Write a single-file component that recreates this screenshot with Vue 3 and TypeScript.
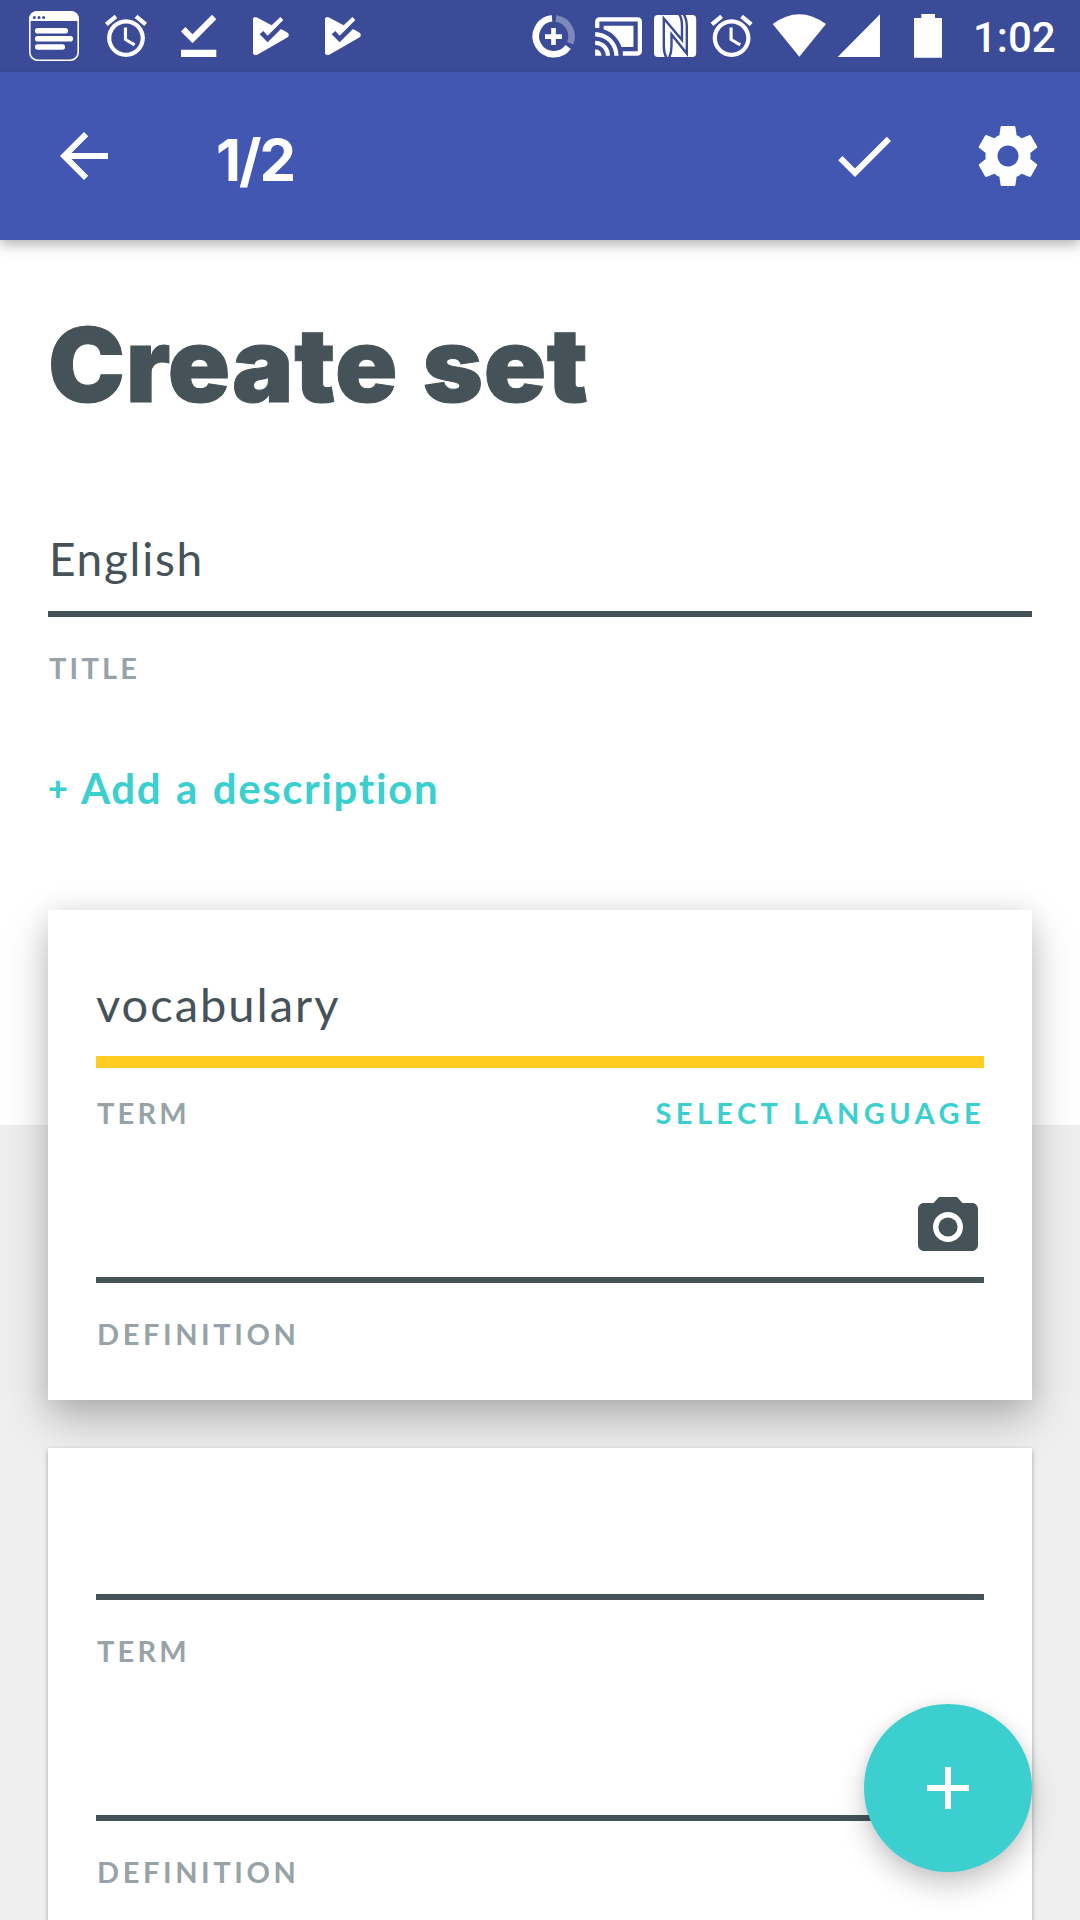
<script setup lang="ts">
interface TermCard {
  id: number
  term: string
  active: boolean
}

const cards: TermCard[] = [
  { id: 1, term: 'vocabulary', active: true },
  { id: 2, term: '', active: false },
]

const alarmPath =
  'M22 5.72l-4.6-3.86-1.29 1.53 4.6 3.86L22 5.72zM7.88 3.39L6.6 1.86 2 5.71l1.29 1.53 4.59-3.85zM12.5 8H11v6l4.75 2.85.75-1.23-4-2.37V8zM12 4c-4.97 0-9 4.03-9 9s4.02 9 9 9c4.97 0 9-4.03 9-9s-4.03-9-9-9zm0 16c-3.87 0-7-3.13-7-7s3.13-7 7-7 7 3.13 7 7-3.13 7-7 7z'
const storePath =
  'M759 58Q759 51 768 51L815 76L841 51L850 60L803 107L790 93L779 103L803 127L843 87L863 98Q870 105 863 112L772 164Q759 168 759 158Z'
</script>

<template>
  <div class="screen">
    <div class="status">
      <div class="notifications">
        <svg width="72" height="72" viewBox="18 0 72 72">
          <rect x="29.8" y="11.8" width="48.4" height="48.4" rx="8" fill="none" stroke="#fff" stroke-width="1.6" />
          <path d="M29 21V19a8 8 0 0 1 8-8h34a8 8 0 0 1 8 8v2z" fill="#fff" />
          <g fill="#3b4b98"><circle cx="34.3" cy="17.4" r="1.5" /><circle cx="39" cy="17.4" r="1.5" /><circle cx="43.6" cy="17.4" r="1.5" /></g>
          <path d="M37.7 30.7H65.3M37.7 38.8H70.3M37.7 47H62.3" stroke="#fff" stroke-width="5.6" stroke-linecap="round" />
        </svg>
        <svg width="72" height="72" viewBox="90 0 72 72">
          <path :d="alarmPath" transform="translate(100.8 10.8) scale(2.1)" fill="#fff" />
        </svg>
        <svg width="72" height="72" viewBox="162 0 72 72">
          <path d="M181 31.5L185.3 27L192.5 34.2L212 14.7L216.3 19.3L192.5 43.3ZM181 49.7H216.3V57H181Z" fill="#fff" />
        </svg>
        <svg width="72" height="72" viewBox="234 0 72 72">
          <path :d="storePath" transform="scale(.33333)" fill="#fff" />
        </svg>
        <svg width="72" height="72" viewBox="234 0 72 72">
          <path :d="storePath" transform="scale(.33333)" fill="#fff" />
        </svg>
      </div>
      <div class="system">
        <svg width="56" height="72" viewBox="528 0 56 72" fill="none">
          <path d="M552 18.3A18 18 0 1 0 568.2 47" stroke="#fff" stroke-width="6.6" />
          <path d="M556 18.5A18 18 0 0 1 570.2 43.2" stroke="#fff" stroke-opacity=".34" stroke-width="6.6" />
          <path d="M545 36.6H562M553.5 28V45" stroke="#fff" stroke-width="4.6" />
        </svg>
        <svg width="64" height="72" viewBox="584 0 64 72">
          <path
            transform="translate(593 10.9) scale(2.13)"
            fill="#fff"
            d="M1 18v3h3c0-1.66-1.34-3-3-3zm0-4v2c2.76 0 5 2.24 5 5h2c0-3.87-3.13-7-7-7zm18-7H5v1.63c3.96 1.28 7.09 4.41 8.37 8.37H19V7zM1 10v2c4.97 0 9 4.03 9 9h2c0-6.08-4.93-11-11-11zm20-7H3c-1.1 0-2 .9-2 2v3h2V5h18v14h-7v2h7c1.1 0 2-.9 2-2V5c0-1.1-.9-2-2-2z"
          />
        </svg>
        <svg width="56" height="72" viewBox="648 0 56 72" fill="none">
          <rect x="654" y="15" width="42.2" height="42" rx="4" fill="#fff" />
          <g stroke="#3b4b98" stroke-width="2.4">
            <path d="M666.5 58Q663.8 53 663.8 46V18.5L682 40V26Q682 18 679 14" />
            <path d="M683.5 14Q686.8 19 686.8 26V53.5L671.5 34.5V46Q671.5 53 669 58" />
          </g>
        </svg>
        <svg width="58" height="72" viewBox="704 0 58 72">
          <path :d="alarmPath" transform="translate(706.4 10.8) scale(2.1)" fill="#fff" />
        </svg>
        <svg width="70" height="72" viewBox="762 0 70 72">
          <path d="M772.7 24Q799.3 4.3 826 24L799.3 56.7Z" fill="#fff" />
        </svg>
        <svg width="60" height="72" viewBox="832 0 60 72">
          <path d="M837.7 57L880 14.3V57Z" fill="#fff" />
        </svg>
        <svg width="68" height="72" viewBox="892 0 68 72">
          <path d="M914 18H921.3V14H935V18H942V57.7H914Z" fill="#fff" />
        </svg>
        <span class="clock">1:02</span>
      </div>
    </div>

    <header class="appbar">
      <svg width="72" height="72" viewBox="0 0 24 24" fill="#fff">
        <path d="M20 11H7.83l5.59-5.59L12 4l-8 8 8 8 1.41-1.41L7.83 13H20v-2z" />
      </svg>
      <span class="progress">1/2</span>
      <svg width="72" height="72" viewBox="0 0 24 24" fill="#fff">
        <path d="M9 16.17L4.83 12l-1.42 1.41L9 19 21 7l-1.41-1.41z" />
      </svg>
      <svg class="gear" width="72" height="72" viewBox="0 0 24 24" fill="#fff">
        <path
          d="M19.43 12.98c.04-.32.07-.64.07-.98s-.03-.66-.07-.98l2.11-1.65c.19-.15.24-.42.12-.64l-2-3.46c-.12-.22-.39-.3-.61-.22l-2.49 1c-.52-.4-1.08-.73-1.69-.98l-.38-2.65C14.46 2.18 14.25 2 14 2h-4c-.25 0-.46.18-.49.42l-.38 2.65c-.61.25-1.17.59-1.69.98l-2.49-1c-.23-.09-.49 0-.61.22l-2 3.46c-.13.22-.07.49.12.64l2.11 1.65c-.04.32-.07.65-.07.98s.03.66.07.98l-2.11 1.65c-.19.15-.24.42-.12.64l2 3.46c.12.22.39.3.61.22l2.49-1c.52.4 1.08.73 1.69.98l.38 2.65c.03.24.24.42.49.42h4c.25 0 .46-.18.49-.42l.38-2.65c.61-.25 1.17-.59 1.69-.98l2.49 1c.23.09.49 0 .61-.22l2-3.46c.12-.22.07-.49-.12-.64l-2.11-1.65zM12 15.5c-1.93 0-3.5-1.57-3.5-3.5s1.57-3.5 3.5-3.5 3.5 1.57 3.5 3.5-1.57 3.5-3.5 3.5z"
        />
      </svg>
    </header>

    <main class="content">
      <h1>Create set</h1>
      <div class="field title-field"><span class="english">English</span></div>
      <div class="label-row"><span class="label title-label">TITLE</span></div>
      <div class="describe"><span class="plus">+</span><span>Add a description</span></div>

      <section v-for="card in cards" :key="card.id" class="card" :class="{ raised: card.active }">
        <div class="field term-field" :class="{ focused: card.active }">
          <span class="vocab">{{ card.term }}</span>
        </div>
        <div class="label-row" :class="{ tight: card.active }">
          <span class="label term-label">TERM</span>
          <span v-if="card.active" class="label language">SELECT LANGUAGE</span>
        </div>
        <div class="field definition-field">
          <svg v-if="card.active" width="72" height="72" viewBox="0 0 24 24" fill="#455358">
            <circle cx="12" cy="12" r="3.2" />
            <path d="M9 2L7.17 4H4c-1.1 0-2 .9-2 2v12c0 1.1.9 2 2 2h16c1.1 0 2-.9 2-2V6c0-1.1-.9-2-2-2h-3.17L15 2H9zm3 15c-2.76 0-5-2.24-5-5s2.24-5 5-5 5 2.24 5 5-2.24 5-5 5z" />
          </svg>
        </div>
        <div class="label-row"><span class="label definition-label">DEFINITION</span></div>
      </section>
    </main>

    <button class="fab" type="button" aria-label="Add card">
      <svg width="72" height="72" viewBox="0 0 24 24" fill="#fff">
        <path d="M19 13h-6v6h-2v-6H5v-2h6V5h2v6h6v2z" />
      </svg>
    </button>
  </div>
</template>

<style>
body {
  margin: 0;
}
</style>

<style scoped>
.screen {
  position: relative;
  box-sizing: border-box;
  width: 1080px;
  height: 1920px;
  overflow: hidden;
  background: linear-gradient(#fff 1125px, #efefef 1125px);
  color: #455358;
  font-family: Lato, 'Open Sans', sans-serif;
}
svg {
  display: block;
  flex: none;
}
.status {
  display: flex;
  justify-content: space-between;
  height: 72px;
  padding: 0 24px 0 18px;
  background: #3b4b98;
}
.notifications,
.system {
  display: flex;
}
.system {
  width: 528px;
}
.clock {
  padding-left: 13px;
  color: #fff;
  font: 500 42px/76px Roboto, sans-serif;
}
.appbar {
  position: relative;
  display: flex;
  align-items: center;
  height: 168px;
  box-sizing: border-box;
  padding: 0 36px 0 48px;
  background: #4257b2;
  box-shadow: 0 5px 12px rgba(0, 0, 0, 0.29);
}
.progress {
  flex: 1;
  margin-left: 96px;
  padding-top: 8px;
  color: #fff;
  font-family: Inter, sans-serif;
  font-size: 58px;
  font-weight: 700;
  line-height: 70px;
  letter-spacing: -2px;
}
.gear {
  margin-left: 72px;
}
.content {
  padding: 55px 48px 0;
}
h1 {
  margin: 0;
  font-family: Inter, sans-serif;
  font-size: 103px;
  font-weight: 900;
  line-height: 140px;
  letter-spacing: 0.7px;
  word-spacing: 3px;
  -webkit-text-stroke: 1px #455358;
}
.field {
  display: flex;
  box-sizing: border-box;
  border-bottom: 6px solid #455358;
  font-size: 46px;
  line-height: 62px;
}
.title-field {
  height: 89px;
  margin-top: 93px;
}
.english {
  margin-left: 1px;
  letter-spacing: 1.7px;
}
.vocab {
  font-size: 47px;
  line-height: 60px;
  letter-spacing: 2px;
}
.label-row {
  display: flex;
  justify-content: space-between;
  padding-top: 31px;
}
.label-row.tight {
  padding-top: 25px;
}
.label {
  color: #97a3a8;
  font-size: 29px;
  font-weight: 700;
  line-height: 40px;
  letter-spacing: 3.2px;
}
.title-label,
.term-label,
.definition-label {
  margin-left: 1px;
}
.definition-label {
  letter-spacing: 3.6px;
}
.language {
  margin-right: -1px;
  color: #3ccfcf;
  letter-spacing: 4.4px;
}
.describe {
  display: flex;
  margin-top: 74px;
  color: #3ccfcf;
  font-size: 42px;
  font-weight: 700;
  line-height: 52px;
  letter-spacing: 1.6px;
  word-spacing: 2px;
}
.plus {
  width: 33px;
  font-size: 34px;
  font-weight: 900;
}
.card {
  box-sizing: border-box;
  height: 490px;
  margin-top: 48px;
  padding: 64px 48px 0;
  background: #fff;
  box-shadow: 0 2px 5px rgba(0, 0, 0, 0.3);
}
.card.raised {
  margin-top: 96px;
  box-shadow: 0 19px 40px rgba(0, 0, 0, 0.25), 0 0 22px rgba(0, 0, 0, 0.08);
}
.term-field {
  height: 88px;
}
.term-field.focused {
  height: 94px;
  border-bottom: 12px solid #ffcd1f;
}
.definition-field {
  height: 150px;
  justify-content: flex-end;
  padding-top: 58px;
}
.fab {
  position: absolute;
  top: 1704px;
  left: 864px;
  display: flex;
  align-items: center;
  justify-content: center;
  width: 168px;
  height: 168px;
  padding: 0;
  border: 0;
  border-radius: 50%;
  background: #3ccfcf;
  box-shadow: 0 14px 28px rgba(0, 0, 0, 0.2), 0 0 12px rgba(0, 0, 0, 0.08);
}
</style>
